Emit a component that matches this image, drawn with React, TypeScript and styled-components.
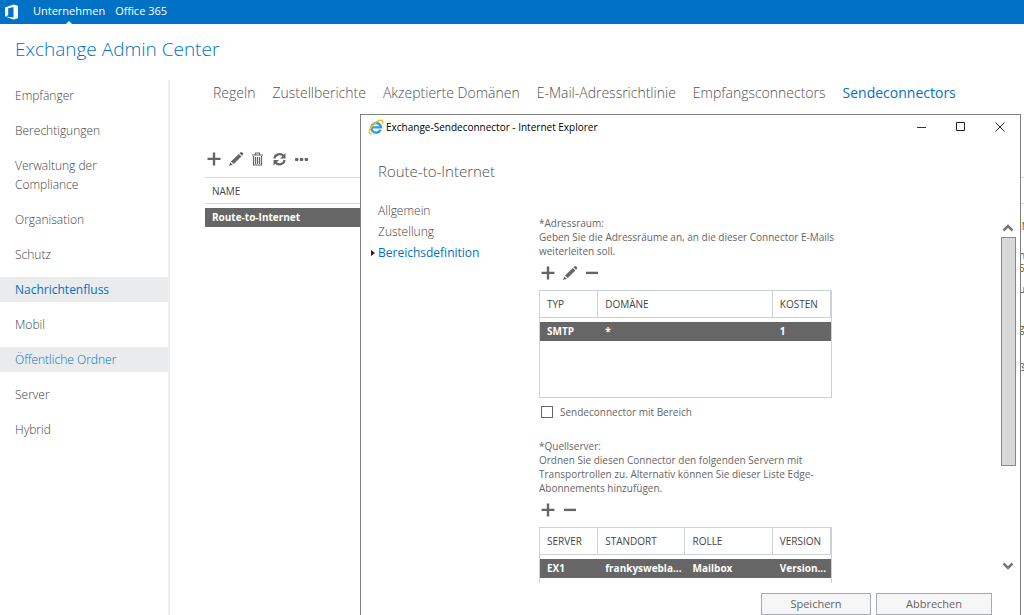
import React from 'react';
import styled, { createGlobalStyle, css } from 'styled-components';

const GlobalStyle = createGlobalStyle`
  * { box-sizing: border-box; }
  html, body, #root { height: 100%; }
  body {
    margin: 0;
    background: #fff;
    color: #666;
    font-family: 'Open Sans', 'Noto Sans', sans-serif;
    font-size: 10px;
    overflow: hidden;
  }
  a { color: inherit; text-decoration: none; }
  ul { list-style: none; margin: 0; padding: 0; }
  h1, h2, p { margin: 0; font-weight: 300; }
  button { font: inherit; color: inherit; background: none; border: 0; padding: 0; }
`;

const Page = styled.div`
  position: relative;
  display: flex;
  flex-direction: column;
  min-height: 100%;
  overflow: hidden;
`;

const TopBar = styled.header`
  display: flex;
  align-items: center;
  height: 24px;
  padding-left: 5px;
  background: #0072c6;
  color: #fff;
`;

const TopLinks = styled.nav`
  display: flex;
  gap: 10px;
  margin-left: 13px;
  align-self: stretch;
`;

const TopLink = styled.a<{ $active?: boolean }>`
  position: relative;
  font-size: 11px;
  line-height: 21px;
  ${({ $active }) =>
    $active &&
    css`
      &::after {
        content: '';
        position: absolute;
        left: 50%;
        bottom: 0;
        margin-left: -3px;
        border: 3px solid transparent;
        border-top: 0;
        border-bottom-color: #fff;
      }
    `}
`;

const Title = styled.h1`
  padding: 12px 15px 0;
  height: 56px;
  color: #0072c6;
  font-size: 19px;
  line-height: 26px;
`;

const Columns = styled.div`
  display: flex;
  flex: 1;
`;

const SideNav = styled.nav`
  flex: 0 0 170px;
  padding-top: 3px;
  border-right: 2px solid #eee;
`;

const SideList = styled.ul`
  display: flex;
  flex-direction: column;
  gap: 10px;
`;

const SideLink = styled.a<{ $active?: boolean; $hover?: boolean }>`
  display: block;
  padding: 3px 40px 3px 15px;
  color: #444;
  font-size: 12px;
  line-height: 19px;
  font-weight: 300;
  white-space: nowrap;
  ${({ $active, $hover }) => ($active || $hover) && 'background: #eaebed; color: #0072c6;'}
  ${({ $active }) => $active && 'font-weight: 400;'}
`;

const Main = styled.main`
  flex: 1;
  min-width: 0;
  padding-left: 35px;
`;

const Tabs = styled.nav`
  display: flex;
  gap: 17px;
  padding: 2px 0 0 8px;
  font-size: 14px;
  line-height: 22px;
  font-weight: 300;
  white-space: nowrap;
  color: #505050;
`;

const Tab = styled.a<{ $active?: boolean }>`
  ${({ $active }) => $active && 'color: #0072c6; font-weight: 400;'}
`;

const Toolbar = styled.div`
  display: flex;
  align-items: center;
  gap: 6px;
`;

const MainToolbar = styled(Toolbar)`
  margin: 47px 0 10px 1px;
`;

const IconButton = styled.button`
  display: flex;
  width: 16px;
  height: 16px;
`;

const Table = styled.table`
  width: 100%;
  table-layout: fixed;
  border-collapse: separate;
  border-spacing: 0;
  text-align: left;
  white-space: nowrap;
`;

const MainHead = styled.th`
  height: 27px;
  padding: 0 7px;
  border: solid #d5dde3;
  border-width: 1px 0;
  font-weight: 400;
  color: #444;
`;

const Spacer = styled.tr`
  height: 4px;
`;

const SelectedCell = styled.td`
  height: 19px;
  padding: 0 0 0 7px;
  background: #666;
  color: #fff;
  line-height: 19px;
  font-weight: 700;
`;

const ListArea = styled.div`
  display: flex;
`;

const ListPane = styled.div`
  flex: 1;
  min-width: 0;
`;

const Details = styled.aside`
  flex: 0 0 5px;
  min-width: 0;
  color: #555;
  line-height: 13px;
  white-space: nowrap;
`;

const DetailsHead = styled.div`
  height: 27px;
  margin-bottom: 16px;
  border: solid #d5dde3;
  border-width: 1px 0;
`;

const DetailsText = styled.p<{ $gap: number }>`
  margin-bottom: ${({ $gap }) => $gap}px;
  font-weight: 400;
`;

const Dialog = styled.section`
  position: absolute;
  z-index: 1;
  top: 114px;
  right: 3px;
  bottom: 0;
  left: 360px;
  display: flex;
  flex-direction: column;
  background: #fff;
  border: solid #808080;
  border-width: 1px 1px 0;
`;

const TitleBar = styled.header`
  display: flex;
  align-items: center;
  flex: 0 0 24px;
  padding: 0 14px 0 7px;
  color: #000;
`;

const WindowTitle = styled.span`
  flex: 1;
  margin-left: 2px;
`;

const WindowButtons = styled.div`
  display: flex;
  gap: 27px;
`;

const WindowButton = styled.button`
  display: flex;
  width: 12px;
  height: 12px;
`;

const DialogTitle = styled.h2`
  flex: none;
  padding: 21px 17px 0;
  color: #505050;
  font-size: 15px;
  line-height: 22px;
`;

const DialogBody = styled.div`
  display: flex;
  flex: 1;
  min-height: 0;
`;

const DialogNav = styled.nav`
  flex: 0 0 178px;
  padding-top: 18px;
  color: #444;
  font-size: 12px;
  line-height: 21px;
  font-weight: 300;
`;

const DialogLink = styled.a<{ $active?: boolean }>`
  position: relative;
  display: block;
  padding-left: 17px;
  ${({ $active }) =>
    $active &&
    css`
      color: #0072c6;
      font-weight: 400;
      &::before {
        content: '';
        position: absolute;
        left: 10px;
        top: 8px;
        border: 3px solid transparent;
        border-left: 4px solid #222;
        border-right: 0;
      }
    `}
`;

const Form = styled.div`
  width: 320px;
  margin-top: 34px;
  height: 367px;
  overflow: hidden;
`;

const FieldText = styled.div`
  line-height: 14px;
  white-space: nowrap;
`;

const FormToolbar = styled(Toolbar)`
  margin: 7px 0 9px 1px;
`;

const Grid = styled.div<{ $height: number }>`
  width: 293px;
  min-height: ${({ $height }) => $height}px;
  border: 1px solid #ccd3d6;
`;

const HeadCell = styled.th`
  height: 27px;
  padding: 0 7px;
  border-right: 1px solid #ccd3d6;
  border-bottom: 1px solid #ccd3d6;
  font-weight: 400;
  color: #444;
`;

const CheckLabel = styled.label`
  display: flex;
  align-items: center;
  gap: 7px;
  margin: 5px 0 18px 2px;
  line-height: 18px;
`;

const CheckBox = styled.input`
  appearance: none;
  width: 12px;
  height: 12px;
  margin: 0;
  border: 1px solid #666;
  background: #fff;
`;

const Scroller = styled.div`
  display: flex;
  flex-direction: column;
  align-items: center;
  width: 16px;
  height: 346px;
  margin: 42px 4px 0 auto;
`;

const Thumb = styled.div`
  flex: none;
  width: 15px;
  height: 229px;
  margin-top: 5px;
  background: #d9d9d9;
  border: 1px solid #8a8a8a;
`;

const ScrollButton = styled.button`
  display: flex;
  &:last-child { margin-top: auto; }
`;

const Actions = styled.footer`
  display: flex;
  justify-content: flex-end;
  flex: none;
  gap: 5px;
  padding-right: 28px;
`;

const ActionButton = styled.button<{ $width: number }>`
  width: ${({ $width }) => $width}px;
  height: 22px;
  border: 1px solid #a5adb0;
  background: #f6f6f6;
  color: #666;
  font-size: 11px;
  line-height: 18px;
`;

const Plus = () => (
  <svg width="16" height="16" viewBox="0 0 16 16" fill="#666">
    <path d="M1.500 6.700h13v2.400h-13zM6.800 1.500h2.400v13H6.800z" />
  </svg>
);
const Minus = () => (
  <svg width="16" height="16" viewBox="0 0 16 16" fill="#666">
    <path d="M2 6.700h12v2.400H2z" />
  </svg>
);
const Pencil = () => (
  <svg width="16" height="16" viewBox="0 0 16 16" fill="#666">
    <path d="M11.500 2.200l1-.9q1-.7 1.800.1l.6.7q.7.800 0 1.700l-.9 1zM10.800 2.900l2.600 2.600-7.700 7.600L3 10.400zM2.300 11.400l2.500 2.400-3.700 1.200z" />
  </svg>
);
const Trash = () => (
  <svg width="16" height="16" viewBox="0 0 16 16" fill="none" stroke="#666" strokeWidth="1.200">
    <path d="M2 4h11M5.500 3.500v-1.500h4v1.500M3.500 5v9h8V5M5.500 6v7M7.500 6v7M9.500 6v7" />
  </svg>
);
const Refresh = () => (
  <svg width="16" height="16" viewBox="0 0 16 16" fill="none" stroke="#666" strokeWidth="2.200">
    <path d="M2.500 7.500a5 4.500 0 0 1 9-2.500M12.500 9a5 4.500 0 0 1-9 2.500" />
    <path d="M13.500 2v5.500H8zM1.500 14.500V9H7z" fill="#666" stroke="none" />
  </svg>
);
const Dots = () => (
  <svg width="16" height="16" viewBox="0 0 16 16" fill="#666">
    <rect x="1" y="7" width="3.500" height="3" rx="1" />
    <rect x="5.800" y="7" width="3.500" height="3" rx="1" />
    <rect x="10.600" y="7" width="3.500" height="3" rx="1" />
  </svg>
);
const OfficeLogo = () => (
  <svg width="15" height="16" viewBox="0 0 15 16" fill="#fff">
    <path d="M0 3.500L8.500.5 13 1.800v12.400l-4.500 1.300L0 12.500l8.500 1V3L3.200 4.300v7L0 12.500z" />
  </svg>
);
const IeLogo = () => (
  <svg width="16" height="16" viewBox="0 0 16 16" fill="none">
    <path
      d="M12.600 10.800A4.800 4.800 0 1 1 13 8.400H4.500"
      stroke="#2f9fe0"
      strokeWidth="2.400"
    />
    <path
      d="M3.800 14.300C.8 15.800.3 12.500 3 8.500S10.500.8 13.500 1.300c1.600.3 1.300 2 .7 3.400"
      stroke="#f2bd2a"
      strokeWidth="1.500"
    />
  </svg>
);
const Chevron = ({ down }: { down?: boolean }) => (
  <svg width="12" height="8" viewBox="0 0 12 8" fill="none" stroke="#777" strokeWidth="2.500">
    <path d={down ? 'M1.500 1.500L6 6l4.500-4.500' : 'M1.500 6.500L6 2l4.500 4.500'} />
  </svg>
);

const sections = [
  'Empfänger',
  'Berechtigungen',
  <>Verwaltung der<br />Compliance</>,
  'Organisation',
  'Schutz',
  'Nachrichtenfluss',
  'Mobil',
  'Öffentliche Ordner',
  'Server',
  'Hybrid',
];

const tabs = [
  'Regeln',
  'Zustellberichte',
  'Akzeptierte Domänen',
  'E-Mail-Adressrichtlinie',
  'Empfangsconnectors',
  'Sendeconnectors',
];

export default function App() {
  return (
    <Page>
      <GlobalStyle />
      <TopBar>
        <OfficeLogo />
        <TopLinks>
          <TopLink href="#" $active>Unternehmen</TopLink>
          <TopLink href="#">Office 365</TopLink>
        </TopLinks>
      </TopBar>
      <Title>Exchange Admin Center</Title>
      <Columns>
        <SideNav>
          <SideList>
            {sections.map((label, i) => (
              <li key={i}>
                <SideLink href="#" $active={i === 5} $hover={i === 7}>{label}</SideLink>
              </li>
            ))}
          </SideList>
        </SideNav>
        <Main>
          <Tabs>
            {tabs.map((label, i) => (
              <Tab key={label} href="#" $active={i === 5}>{label}</Tab>
            ))}
          </Tabs>
          <MainToolbar>
            <IconButton aria-label="Neu"><Plus /></IconButton>
            <IconButton aria-label="Bearbeiten"><Pencil /></IconButton>
            <IconButton aria-label="Löschen"><Trash /></IconButton>
            <IconButton aria-label="Aktualisieren"><Refresh /></IconButton>
            <IconButton aria-label="Mehr"><Dots /></IconButton>
          </MainToolbar>
          <ListArea>
            <ListPane>
              <Table>
                <thead>
                  <tr><MainHead>NAME</MainHead></tr>
                </thead>
                <tbody>
                  <Spacer />
                  <tr><SelectedCell>Route-to-Internet</SelectedCell></tr>
                </tbody>
              </Table>
            </ListPane>
            <Details>
              <DetailsHead />
              <DetailsText $gap={16}>IN</DetailsText>
              <DetailsText $gap={8}>n<br />5</DetailsText>
              <DetailsText $gap={26}>u</DetailsText>
              <DetailsText $gap={26}>g</DetailsText>
              <DetailsText $gap={0}>ß</DetailsText>
            </Details>
          </ListArea>
        </Main>
      </Columns>

      <Dialog aria-label="Exchange-Sendeconnector">
        <TitleBar>
          <IeLogo />
          <WindowTitle>Exchange-Sendeconnector - Internet Explorer</WindowTitle>
          <WindowButtons>
            <WindowButton aria-label="Minimieren">
              <svg width="12" height="12" stroke="#333"><path d="M1 6.500h9" /></svg>
            </WindowButton>
            <WindowButton aria-label="Maximieren">
              <svg width="12" height="12" fill="none" stroke="#222"><path d="M1.500 1.500h8v8h-8z" /></svg>
            </WindowButton>
            <WindowButton aria-label="Schließen">
              <svg width="12" height="12" stroke="#222"><path d="M1.500 1.500l9 9M10.500 1.500l-9 9" /></svg>
            </WindowButton>
          </WindowButtons>
        </TitleBar>
        <DialogTitle>Route-to-Internet</DialogTitle>
        <DialogBody>
          <DialogNav>
            <DialogLink href="#">Allgemein</DialogLink>
            <DialogLink href="#">Zustellung</DialogLink>
            <DialogLink href="#" $active>Bereichsdefinition</DialogLink>
          </DialogNav>
          <Form>
            <FieldText>
              *Adressraum:<br />
              Geben Sie die Adressräume an, an die dieser Connector E-Mails<br />
              weiterleiten soll.
            </FieldText>
            <FormToolbar>
              <IconButton aria-label="Hinzufügen"><Plus /></IconButton>
              <IconButton aria-label="Bearbeiten"><Pencil /></IconButton>
              <IconButton aria-label="Entfernen"><Minus /></IconButton>
            </FormToolbar>
            <Grid $height={108}>
              <Table>
                <colgroup><col width="20%" /><col width="60%" /><col width="20%" /></colgroup>
                <thead>
                  <tr><HeadCell>TYP</HeadCell><HeadCell>DOMÄNE</HeadCell><HeadCell>KOSTEN</HeadCell></tr>
                </thead>
                <tbody>
                  <Spacer />
                  <tr><SelectedCell>SMTP</SelectedCell><SelectedCell>*</SelectedCell><SelectedCell>1</SelectedCell></tr>
                </tbody>
              </Table>
            </Grid>
            <CheckLabel>
              <CheckBox type="checkbox" />
              Sendeconnector mit Bereich
            </CheckLabel>
            <FieldText>
              *Quellserver:<br />
              Ordnen Sie diesen Connector den folgenden Servern mit<br />
              Transportrollen zu. Alternativ können Sie dieser Liste Edge-<br />
              Abonnements hinzufügen.
            </FieldText>
            <FormToolbar>
              <IconButton aria-label="Hinzufügen"><Plus /></IconButton>
              <IconButton aria-label="Entfernen"><Minus /></IconButton>
            </FormToolbar>
            <Grid $height={108}>
              <Table>
                <colgroup><col width="20%" /><col width="30%" /><col width="30%" /><col width="20%" /></colgroup>
                <thead>
                  <tr>
                    <HeadCell>SERVER</HeadCell><HeadCell>STANDORT</HeadCell>
                    <HeadCell>ROLLE</HeadCell><HeadCell>VERSION</HeadCell>
                  </tr>
                </thead>
                <tbody>
                  <Spacer />
                  <tr>
                    <SelectedCell>EX1</SelectedCell><SelectedCell>frankyswebla...</SelectedCell>
                    <SelectedCell>Mailbox</SelectedCell><SelectedCell>Version...</SelectedCell>
                  </tr>
                </tbody>
              </Table>
            </Grid>
          </Form>
          <Scroller>
            <ScrollButton aria-label="Nach oben"><Chevron /></ScrollButton>
            <Thumb />
            <ScrollButton aria-label="Nach unten"><Chevron down /></ScrollButton>
          </Scroller>
        </DialogBody>
        <Actions>
          <ActionButton $width={110}>Speichern</ActionButton>
          <ActionButton $width={116}>Abbrechen</ActionButton>
        </Actions>
      </Dialog>
    </Page>
  );
}
